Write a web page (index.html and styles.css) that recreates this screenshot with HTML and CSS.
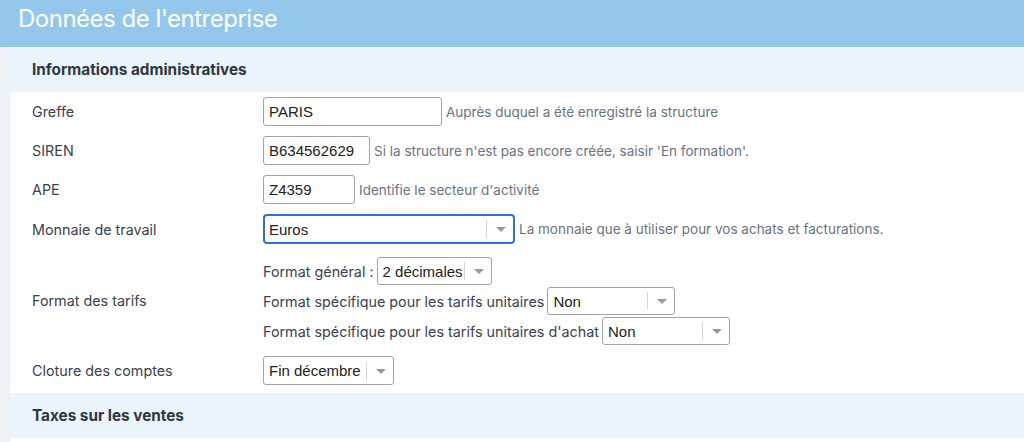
FILE: index.html
```html
<!DOCTYPE html>
<html lang="fr">
<head>
<meta charset="utf-8">
<title>Données de l'entreprise</title>
<link rel="stylesheet" href="styles.css">
</head>
<body>
	<div class="page-title">Données de l'entreprise</div>
	<div class="page">
		<div class="side"></div>
		<div class="panel">
			<div class="section-head">Informations administratives</div>

			<div class="row">
				<div class="label">Greffe</div>
				<div class="field">
					<input class="txt w-greffe" type="text" value="PARIS">
					<span class="hint">Auprès duquel a été enregistré la structure</span>
				</div>
			</div>
			<div class="row">
				<div class="label">SIREN</div>
				<div class="field">
					<input class="txt w-siren" type="text" value="B634562629">
					<span class="hint">Si la structure n'est pas encore créée, saisir 'En formation'.</span>
				</div>
			</div>
			<div class="row">
				<div class="label">APE</div>
				<div class="field">
					<input class="txt w-ape" type="text" value="Z4359">
					<span class="hint">Identifie le secteur d'activité</span>
				</div>
			</div>
			<div class="row">
				<div class="label">Monnaie de travail</div>
				<div class="field">
					<div class="sel sel-focus w-monnaie"><span class="val">Euros</span><span class="arrow"></span></div>
					<span class="hint">La monnaie que à utiliser pour vos achats et facturations.</span>
				</div>
			</div>
			<div class="row">
				<div class="label">Format des tarifs</div>
				<div class="field-stack">
					<div class="line">
						<span class="sub">Format général :</span>
						<div class="sel w-format"><span class="val">2 décimales</span><span class="arrow"></span></div>
					</div>
					<div class="line">
						<span class="sub">Format spécifique pour les tarifs unitaires</span>
						<div class="sel w-non"><span class="val">Non</span><span class="arrow"></span></div>
					</div>
					<div class="line">
						<span class="sub">Format spécifique pour les tarifs unitaires d'achat</span>
						<div class="sel w-non"><span class="val">Non</span><span class="arrow"></span></div>
					</div>
				</div>
			</div>
			<div class="row">
				<div class="label">Cloture des comptes</div>
				<div class="field">
					<div class="sel w-cloture"><span class="val">Fin décembre</span><span class="arrow"></span></div>
				</div>
			</div>

			<div class="section-head">Taxes sur les ventes</div>
		</div>
	</div>
</body>
</html>
```

FILE: styles.css
```css
	body {
		margin: 0;
		font-family: Inter, "Noto Sans", sans-serif;
		color: #3a4250;
		background: #fff;
	}

	.page-title {
		height: 47px;
		background: #93c7ec;
		color: #fff;
		font-size: 24px;
		padding-left: 18px;
		line-height: 38px;
		letter-spacing: -0.5px;
	}

	.page { display: flex; min-height: 395px; }
	.side { width: 10px; background: #eef1f5; }
	.panel { flex: 1; }

	.section-head {
		height: 45px;
		line-height: 45px;
		background: #eaf4fd;
		padding-left: 22px;
		font-size: 15.3px;
		font-weight: 700;
		color: #2f3642;
	}

	.row {
		display: flex;
		align-items: center;
		padding: 5px 0 5px 22px;
	}
	.row + .section-head { margin-top: 3px; }

	.label {
		width: 231px;
		font-size: 14.35px;
		flex: none;
	}

	.field { display: flex; align-items: center; }
	.field-stack { display: flex; flex-direction: column; padding-top: 2px; }
	.line { display: flex; align-items: center; height: 30px; }
	.sub { font-size: 14.35px; margin-right: 3px; }

	.hint {
		font-size: 13.5px;
		color: #6b7280;
		margin-left: 4px;
	}

	.txt {
		box-sizing: border-box;
		height: 29px;
		border: 1px solid #a3a3a3;
		border-radius: 3px;
		padding: 0 5px;
		font-family: "Liberation Sans", Arial, sans-serif;
		font-size: 15px;
		color: #222;
		outline: none;
	}
	.w-greffe { width: 179px; }
	.w-siren { width: 107px; }
	.w-ape { width: 92px; }

	.sel {
		box-sizing: border-box;
		height: 28px;
		display: flex;
		align-items: center;
		border: 1px solid #a3a3a3;
		border-radius: 3px;
		font-family: "Liberation Sans", Arial, sans-serif;
		font-size: 15px;
		color: #222;
		background: #fff;
	}
	.sel .val { flex: 1; padding-left: 5px; white-space: nowrap; }
	.sel .arrow {
		width: 26px;
		height: 18px;
		border-left: 1px solid #d6d6d6;
		position: relative;
	}
	.sel .arrow:after {
		content: "";
		position: absolute;
		left: 9px;
		top: 7px;
		border-left: 5px solid transparent;
		border-right: 5px solid transparent;
		border-top: 5px solid #999;
	}
	.sel-focus {
		height: 30px;
		border: 2px solid #2f6fd6;
		border-radius: 4px;
	}
	.sel-focus .val { padding-left: 4px; }

	.w-monnaie { width: 252px; }
	.w-format { width: 115px; }
	.w-non { width: 128px; }
	.w-cloture { width: 131px; height: 29px; }
```
